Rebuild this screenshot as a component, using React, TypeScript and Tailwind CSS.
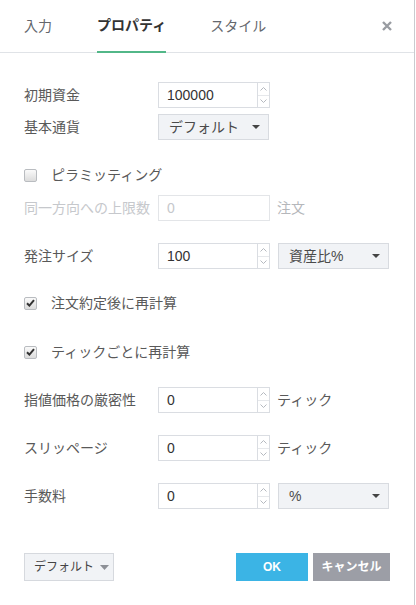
import React from 'react';

const font = { fontFamily: '"Liberation Sans", "Noto Sans CJK JP", sans-serif' };

const Caret = ({ className = '' }: { className?: string }) => (
  <svg width="8" height="4" viewBox="0 0 8 4" className={className}>
    <path d="M0 0 L8 0 L4 4 Z" fill="currentColor" />
  </svg>
);

const Spinner = () => (
  <div className="flex h-[26px] w-[12px] flex-col border border-l-0 border-[#dadde2]">
    <div className="flex flex-1 items-center justify-center border-b border-[#e6e8eb]">
      <svg width="7" height="4" viewBox="0 0 7 4"><path d="M0.5 3.5 L3.5 0.5 L6.5 3.5" fill="none" stroke="#b5b9bf" strokeWidth="1" /></svg>
    </div>
    <div className="flex flex-1 items-center justify-center">
      <svg width="7" height="4" viewBox="0 0 7 4"><path d="M0.5 0.5 L3.5 3.5 L6.5 0.5" fill="none" stroke="#b5b9bf" strokeWidth="1" /></svg>
    </div>
  </div>
);

const NumberInput = ({ value }: { value: string }) => (
  <div className="flex">
    <div className="flex h-[26px] w-[100px] items-center border border-[#dadde2] pl-[8px] text-[14px] text-[#333]">{value}</div>
    <Spinner />
  </div>
);

const Select = ({ value }: { value: string }) => (
  <div className="flex h-[26px] w-[111px] items-center justify-between border border-[#d8dbe0] bg-[#f1f3f6] pl-[10px] pr-[8px] text-[14px] text-[#4a4a4a]">
    <span className="whitespace-nowrap">{value}</span>
    <Caret className="text-[#444]" />
  </div>
);

const Check = ({ checked }: { checked: boolean }) => (
  <span className="flex h-[13px] w-[13px] items-center justify-center rounded-[2px] border border-[#b9bcc0] bg-gradient-to-b from-[#fafafa] to-[#dcdcdc]">
    {checked && (
      <svg width="9" height="8" viewBox="0 0 9 8"><path d="M1 4.2 L3.4 6.6 L8 1.2" fill="none" stroke="#333" strokeWidth="2" /></svg>
    )}
  </span>
);

const Label = ({ children, disabled }: { children: React.ReactNode; disabled?: boolean }) => (
  <div className={`w-[134px] whitespace-nowrap text-[14px] ${disabled ? 'text-[#c6c8cc]' : 'text-[#595959]'}`}>{children}</div>
);

export default function App() {
  return (
    <div className="h-[605px] w-[416px] bg-white" style={font}>
      <div className="flex h-full w-[415px] flex-col border-r border-[#c9cbcf]">
        <div className="flex h-[53px] items-stretch border-b border-[#e0e3e7] pl-[24px] pr-[22px] text-[14px]">
          <div className="flex items-center text-[#64676d]">入力</div>
          <div className="-mb-px ml-[45px] flex items-center border-b-2 border-[#52b788] font-bold text-[#333]">プロパティ</div>
          <div className="ml-[44px] flex items-center text-[#64676d]">スタイル</div>
          <div className="ml-auto flex items-center">
            <svg width="10" height="10" viewBox="0 0 10 10"><path d="M1 1 L9 9 M9 1 L1 9" stroke="#999ca2" strokeWidth="2.4" /></svg>
          </div>
        </div>

        <div className="flex flex-col pl-[24px]">
          <div className="mt-[29px] flex h-[26px] items-center">
            <Label>初期資金</Label>
            <NumberInput value="100000" />
          </div>
          <div className="mt-[6px] flex h-[26px] items-center">
            <Label>基本通貨</Label>
            <Select value="デフォルト" />
          </div>
          <div className="mt-[22px] flex h-[26px] items-center gap-[14px]">
            <Check checked={false} />
            <span className="text-[14px] text-[#595959]">ピラミッティング</span>
          </div>
          <div className="mt-[7px] flex h-[26px] items-center">
            <Label disabled>同一方向への上限数</Label>
            <div className="flex h-[26px] w-[112px] items-center border border-[#e3e5e8] pl-[8px] text-[14px] text-[#c6c8cc]">0</div>
            <span className="ml-[7px] text-[14px] text-[#b5b7bb]">注文</span>
          </div>
          <div className="mt-[22px] flex h-[26px] items-center">
            <Label>発注サイズ</Label>
            <NumberInput value="100" />
            <div className="ml-[8px]"><Select value="資産比%" /></div>
          </div>
          <div className="mt-[21px] flex h-[26px] items-center gap-[14px]">
            <Check checked />
            <span className="text-[14px] text-[#595959]">注文約定後に再計算</span>
          </div>
          <div className="mt-[23px] flex h-[26px] items-center gap-[14px]">
            <Check checked />
            <span className="text-[14px] text-[#595959]">ティックごとに再計算</span>
          </div>
          <div className="mt-[22px] flex h-[26px] items-center">
            <Label>指値価格の厳密性</Label>
            <NumberInput value="0" />
            <span className="ml-[7px] text-[14px] text-[#595959]">ティック</span>
          </div>
          <div className="mt-[22px] flex h-[26px] items-center">
            <Label>スリッページ</Label>
            <NumberInput value="0" />
            <span className="ml-[7px] text-[14px] text-[#595959]">ティック</span>
          </div>
          <div className="mt-[22px] flex h-[26px] items-center">
            <Label>手数料</Label>
            <NumberInput value="0" />
            <div className="ml-[8px]"><Select value="%" /></div>
          </div>

          <div className="mt-[44px] flex items-center pr-[24px]">
            <div className="flex h-[28px] w-[90px] items-center gap-[6px] whitespace-nowrap border border-[#d6d9de] bg-[#f1f3f6] pl-[9px] text-[12px] text-[#444]">
              <span>デフォルト</span>
              <svg width="9" height="5" viewBox="0 0 9 5"><path d="M0 0 L9 0 L4.5 5 Z" fill="#8d9096" /></svg>
            </div>
            <div className="ml-auto flex h-[28px] w-[72px] items-center justify-center bg-[#3bb4e5] text-[12px] font-bold text-white">OK</div>
            <div className="ml-[5px] flex h-[28px] w-[77px] items-center justify-center bg-[#9c9ea6] text-[12px] font-bold text-white">キャンセル</div>
          </div>
        </div>
      </div>
    </div>
  );
}
